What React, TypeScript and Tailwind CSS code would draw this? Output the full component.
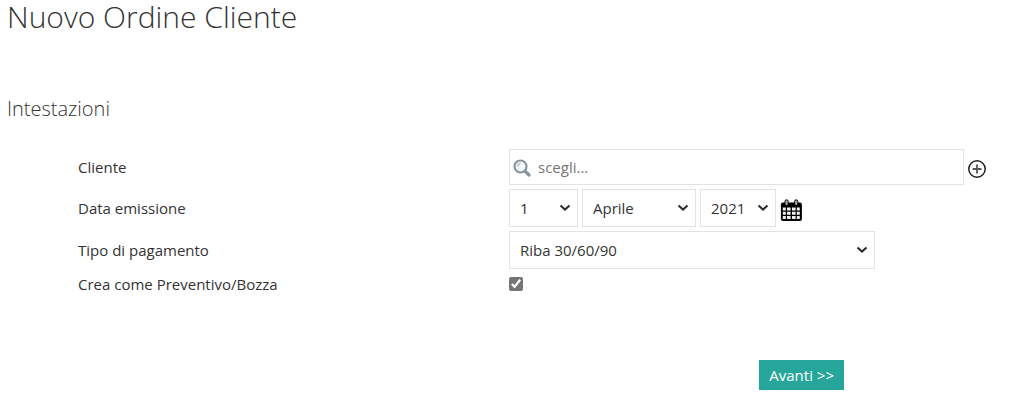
import type { ReactNode } from "react";

const selectClass =
  "block h-[38px] appearance-none border border-[#e2e2e2] bg-white pl-[10px] pr-6 text-[15px]";

const months = [
  "Gennaio",
  "Febbraio",
  "Marzo",
  "Aprile",
  "Maggio",
  "Giugno",
  "Luglio",
  "Agosto",
  "Settembre",
  "Ottobre",
  "Novembre",
  "Dicembre",
];

function Row({ id, label, children }: { id: string; label: string; children: ReactNode }) {
  return (
    <div className="grid grid-cols-[431fr_500fr] items-center">
      <label htmlFor={id} className="leading-[22px]">
        {label}
      </label>
      <div className="flex min-w-0 items-center gap-1">{children}</div>
    </div>
  );
}

function SelectBox({ children }: { children: ReactNode }) {
  return (
    <div className="relative">
      {children}
      <svg
        viewBox="0 0 12 8"
        className="pointer-events-none absolute top-[15px] right-[7px] h-2 w-3"
        fill="none"
        aria-hidden="true"
      >
        <path d="M1.5 1.5 6 5.6l4.5-4.1" stroke="#2a2a2a" strokeWidth="2" />
      </svg>
    </div>
  );
}

function SearchIcon() {
  return (
    <svg viewBox="0 0 18 18" className="mt-px size-[18px] shrink-0" fill="none" aria-hidden="true">
      <path d="M11.8 11.8 16 16" stroke="#8a949d" strokeWidth="3.2" strokeLinecap="round" />
      <circle cx="7.5" cy="7.5" r="6" fill="#f4f7f9" stroke="#8a949d" strokeWidth="2.2" />
      <path d="M4.7 7.6A3 3 0 0 1 7.6 4.7" stroke="#a9b3bb" strokeWidth="1.2" />
    </svg>
  );
}

function PlusIcon() {
  return (
    <svg viewBox="0 0 18 18" className="size-[18px]" fill="none" aria-hidden="true">
      <circle cx="9" cy="9" r="8.2" stroke="#222" strokeWidth="1.5" />
      <path d="M9 4.6v8.8M4.6 9h8.8" stroke="#555" strokeWidth="1.8" />
    </svg>
  );
}

function CalendarIcon() {
  return (
    <svg viewBox="0 0 22 22" className="size-[22px]" aria-hidden="true">
      <rect x="0.9" y="3.4" width="21" height="18.6" rx="2" fill="#000" />
      <g fill="#f0f0f0">
        <path d="M2.8 8.6h3v3h-3zM7 8.6h3.6v3H7zM12 8.6h3.6v3H12zM16.8 8.6h3v3h-3z" />
        <path d="M2.8 12.8h3v3h-3zM7 12.8h3.6v3H7zM12 12.8h3.6v3H12zM16.8 12.8h3v3h-3z" />
        <path d="M2.8 17h3v3h-3zM7 17h3.6v3H7zM12 17h3.6v3H12zM16.8 17h3v3h-3z" />
      </g>
      <rect x="5" y="0.8" width="3.2" height="5.8" rx="1.6" fill="#aaa" stroke="#000" strokeWidth="1" />
      <rect x="14.6" y="0.8" width="3.2" height="5.8" rx="1.6" fill="#aaa" stroke="#000" strokeWidth="1" />
    </svg>
  );
}

export default function App() {
  return (
    <main className="bg-white pb-4 font-['Open_Sans','Noto_Sans',sans-serif] text-[15px] text-[#333]">
      <h1 className="px-[7px] text-[30px] leading-[34px] font-light">Nuovo Ordine Cliente</h1>
      <form onSubmit={(event) => event.preventDefault()}>
        <h2 className="mt-[60px] px-[7px] text-xl leading-[30px] font-light">Intestazioni</h2>
        <div className="mt-[25px] flex flex-col gap-1 pl-[78px]">
          <Row id="cliente" label="Cliente">
            <div className="flex h-9 w-[455px] min-w-0 items-center gap-[7px] border border-[#e2e2e2] pl-[3px]">
              <SearchIcon />
              <input
                id="cliente"
                type="text"
                placeholder="scegli..."
                className="h-full w-full min-w-0 outline-none placeholder:text-[#757575]"
              />
            </div>
            <button type="button" aria-label="Aggiungi cliente" className="mt-1 shrink-0">
              <PlusIcon />
            </button>
          </Row>
          <Row id="giorno" label="Data emissione">
            <SelectBox>
              <select id="giorno" defaultValue="1" className={`${selectClass} w-[69px]`}>
                {Array.from({ length: 31 }, (_, i) => (
                  <option key={i}>{i + 1}</option>
                ))}
              </select>
            </SelectBox>
            <SelectBox>
              <select aria-label="Mese" defaultValue="Aprile" className={`${selectClass} w-[114px]`}>
                {months.map((month) => (
                  <option key={month}>{month}</option>
                ))}
              </select>
            </SelectBox>
            <SelectBox>
              <select aria-label="Anno" defaultValue="2021" className={`${selectClass} w-[76px]`}>
                <option>2020</option>
                <option>2021</option>
                <option>2022</option>
              </select>
            </SelectBox>
            <button type="button" aria-label="Apri calendario" className="mt-1 shrink-0">
              <CalendarIcon />
            </button>
          </Row>
          <Row id="pagamento" label="Tipo di pagamento">
            <SelectBox>
              <select id="pagamento" className={`${selectClass} w-[366px]`}>
                <option>Riba 30/60/90</option>
              </select>
            </SelectBox>
          </Row>
          <Row id="bozza" label="Crea come Preventivo/Bozza">
            <input id="bozza" type="checkbox" defaultChecked className="size-[14px] accent-[#757575]" />
          </Row>
        </div>
        <div className="mt-[65px] flex justify-end pr-[165px]">
          <button type="submit" className="h-[30px] bg-[#26a69a] px-[10px] text-white">
            Avanti &gt;&gt;
          </button>
        </div>
      </form>
    </main>
  );
}
